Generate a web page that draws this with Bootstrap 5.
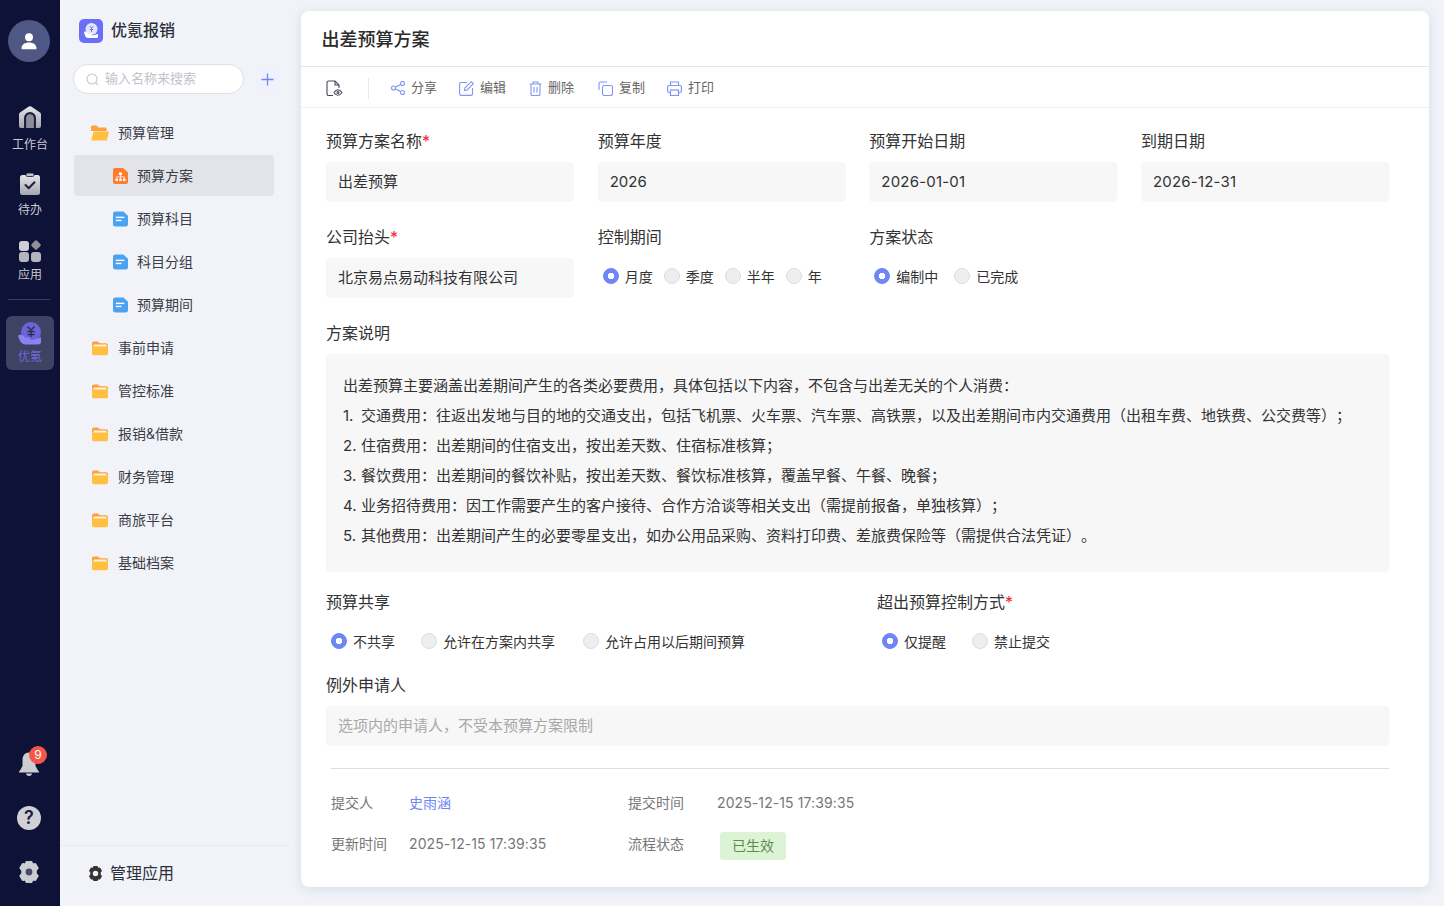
<!DOCTYPE html>
<html lang="zh-CN">
<head>
  <meta charset="UTF-8" />
  <meta name="viewport" content="width=device-width, initial-scale=1.0"/>
  <title>优氪报销</title>
  <link href="https://cdn.jsdelivr.net/npm/bootstrap@5.3.3/dist/css/bootstrap.min.css" rel="stylesheet" />
  <style>
    body {
      background: linear-gradient(to right, #0e1236 60px, #f1f3f9 60px);
      font-family: Inter, "Noto Sans CJK SC", sans-serif;
      color: #333;
      overflow: hidden;
      text-spacing-trim: space-all;
    }
    .app-shell { width: 1440px; height: 900px; }

    /* left rail */
    .rail { width: 60px; background: #0e1236; padding-top: 20px; }
    .rail-avatar { width: 42px; height: 42px; background: #4f5785; margin-left: -2px; margin-bottom: 44px; }
    .rail-link { width: 48px; font-size: 12px; line-height: 16px; color: #c9cad2; }
    .rail-link svg { display: block; }
    .rail-home { gap: 9px; margin-bottom: 20px; }
    .rail-todo { gap: 7px; margin-bottom: 22px; }
    .rail-apps { gap: 5px; }
    .rail-sep { width: 42px; height: 1px; background: #3a3e5e; margin: 16px 0 16px -2px; }
    .rail-active { height: 54px; background: #3f4263; color: #6d69d6; border-radius: 6px; padding-top: 6px; gap: 3px; }
    .rail-bottom { gap: 30px; padding-bottom: 17px; margin-left: -2px; }
    .rail-gear { margin-top: 1px; }
    .bell-count {
      top: -6px; right: -8px; width: 18px; height: 18px;
      background: #f5564a; color: #fff; font-size: 12px; line-height: 18px; text-align: center;
    }
    .help-dot { width: 24px; height: 24px; background: #d0d1d6; color: #1c2042; font-size: 18px; line-height: 24px; font-weight: 600; text-align: center; }

    /* tree column */
    .side { width: 229px; }
    .side-brand { height: 64px; padding: 19px 0 0 19px; font-size: 16px; font-weight: 500; color: #2b2f3a; gap: 8px; }
    .side-brand span { line-height: 22px; }
    .side-search { width: 171px; height: 30px; margin-left: 13px; background: #fff; border: 1px solid #e0e1e6; border-radius: 15px; font-size: 13px; color: #c2c3ca; padding-left: 12px; gap: 6px; }
    .side-add { width: 24px; height: 24px; margin-left: 11px; background: #eff2fc; border-radius: 4px; }
    .side-tree { margin: 18px 0 0 14px; width: 200px; }
    .tree-row { height: 41px; margin-bottom: 2px; font-size: 14px; color: #3a3d47; padding-left: 17px; gap: 9px; border-radius: 4px; }
    .tree-row.sub { padding-left: 39px; gap: 9px; }
    .tree-row.current { background: #e3e4e9; }
    .side-foot { height: 55px; border-top: 1px solid #e8e9ee; padding-left: 28px; font-size: 16px; color: #2b2f3a; gap: 7px; }

    /* main panel */
    .panel { width: 1128px; height: 876px; margin: 11px 0 0 12px; background: #fff; border-radius: 8px; box-shadow: 0 2px 12px rgba(30, 40, 80, .11); }
    .panel-title { height: 56px; padding: 2px 0 0 20.500px; font-size: 18px; font-weight: 500; color: #2b2b2b; border-bottom: 1px solid #e4e4e6; }
    .panel-tools { height: 41px; padding: 2px 0 0 25px; font-size: 13px; color: #666; border-bottom: 1px solid #eee; }
    .tools-sep { width: 1px; height: 21px; background: #e8e8e8; margin: 0 22px 0 24px; }
    .tool-btn { margin-right: 22px; gap: 6px; }
    .tool-btn.wide-a { margin-right: 23px; }
    .tool-btn.wide-b { margin-right: 24px; }
    .panel-form { padding: 21px 40px 0 25px; }
    .field-grid { display: grid; grid-template-columns: repeat(4, 1fr); column-gap: 23.670px; row-gap: 23px; }
    .share-grid { display: grid; grid-template-columns: 551px 1fr; }
    .field-label { font-size: 16px; line-height: 24px; margin-bottom: 9px; color: #333; }
    .field-label i { color: #f5222d; font-style: normal; }
    .field-label.gap-top { margin-top: 23px; }
    .field-label.gap-mid { margin-top: 14px; }
    .field-box { height: 40px; line-height: 40px; padding-left: 12px; background: #f7f7f7; border-radius: 4px; font-size: 15px; color: #333; }
    .field-box.empty { color: #a8a8a8; }
    .date-text { letter-spacing: .2px; }
    .note-box { height: 218px; padding: 17px; background: #f7f7f7; border-radius: 4px; font-size: 15px; line-height: 30px; color: #333; margin-bottom: 18px; }
    .note-num { display: inline-block; width: 18px; white-space: pre; }
    .radio-line { height: 36px; padding-left: 5px; font-size: 14px; color: #333; }
    .radio-line.gap-s { gap: 11px; }
    .radio-line.gap-m { gap: 16px; }
    .radio-line.gap-l { gap: 26px; }
    .radio-opt { gap: 6px; }
    .radio-opt.push { margin-left: 2px; }
    .radio-opt .form-check-input { width: 16px; height: 16px; margin: 0; background-color: #eee; border-color: #ddd; }
    .radio-opt .form-check-input:checked { background-image: radial-gradient(circle, #fff 3px, #6f86f5 3.500px); background-color: #6f86f5; border-color: #6f86f5; }
    .form-rule { height: 1px; background: #ddd; margin: 22px 0 13px 5px; }
    .meta-row { height: 41px; margin-left: 5px; font-size: 14px; color: #777; }
    .meta-a { width: 78px; }
    .meta-b { width: 219px; }
    .meta-c { width: 89px; }
    .meta-date { letter-spacing: .1px; }
    .meta-user { color: #6f86f5; }
    .meta-tag { width: 66px; height: 28px; line-height: 28px; margin: 4px 0 0 3px; background: #dcf3d6; color: #5c8d4f; text-align: center; border-radius: 3px; }
  </style>
</head>
<body>

  <svg width="0" height="0" class="position-absolute">
    <defs>
      <linearGradient id="railFill" x1="0" y1="0" x2="0" y2="1">
        <stop offset="0" stop-color="#e6e6ea"/><stop offset="1" stop-color="#a4a5ae"/>
      </linearGradient>
      <symbol id="folder" viewBox="0 0 18 16">
        <path d="M1 3.500C1 2.400 1.800 1.500 2.900 1.500h3.600c.6 0 1 .3 1.400.7l1 1.100h6.200c1 0 1.800.8 1.800 1.800V6H1z" fill="#ff9f40"/>
        <path d="M1 6h16v7.500c0 1-.8 1.800-1.800 1.800H2.800c-1 0-1.800-.8-1.800-1.800z" fill="#ffc042"/>
        <rect x="2.500" y="4.500" width="13" height="2" fill="#fff3d6"/>
      </symbol>
      <symbol id="doc" viewBox="0 0 16 16">
        <path d="M2.500 0H11l5 4.500V13.500a2.500 2.500 0 0 1-2.500 2.500h-11A2.500 2.500 0 0 1 0 13.500v-11A2.500 2.500 0 0 1 2.500 0z" fill="#4ba3f0"/>
        <rect x="3" y="5.500" width="9" height="1.500" fill="#fff"/>
        <rect x="3" y="8.800" width="6" height="1.500" fill="#fff"/>
      </symbol>
    </defs>
  </svg>

  <div class="app-shell d-flex">

    <!-- Rail -->
    <nav class="rail d-flex flex-column align-items-center flex-shrink-0">
      <div class="rail-avatar rounded-circle d-flex align-items-center justify-content-center">
        <svg width="18" height="18" viewBox="0 0 18 18" fill="#fff"><circle cx="9" cy="5.200" r="4"/><path d="M1.500 16.500c0-4 3.300-6 7.500-6s7.500 2 7.500 6c0 .4-.3.700-.7.700H2.200c-.4 0-.7-.3-.7-.7z"/></svg>
      </div>
      <a class="rail-link rail-home d-flex flex-column align-items-center text-decoration-none">
        <svg width="22" height="22" viewBox="0 0 22 22"><path d="M9.800.6 1 6.400C.4 6.800 0 7.500 0 8.300V20a2 2 0 0 0 2 2h18a2 2 0 0 0 2-2V8.300c0-.8-.4-1.500-1-1.900L12.200.6a2.200 2.200 0 0 0-2.400 0z" fill="url(#railFill)"/><path d="M5 22V12a6 6 0 0 1 12 0v10h-2.500V12a3.500 3.500 0 0 0-7 0v10z" fill="#1c2042"/><path d="M7.500 22V12a3.500 3.500 0 0 1 7 0v10z" fill="#8d8e99"/></svg>
        <span>工作台</span>
      </a>
      <a class="rail-link rail-todo d-flex flex-column align-items-center text-decoration-none">
        <svg width="20" height="22" viewBox="0 0 20 22"><rect y="2" width="20" height="20" rx="2.500" fill="url(#railFill)"/><rect x="6" y="0" width="8" height="3.500" rx="1.500" fill="#c4c5cc" stroke="#0e1236" stroke-width=".8"/><path d="m5.500 12 3.200 3.200 5.800-6" fill="none" stroke="#1c2042" stroke-width="2" stroke-linecap="round" stroke-linejoin="round"/></svg>
        <span>待办</span>
      </a>
      <a class="rail-link rail-apps d-flex flex-column align-items-center text-decoration-none">
        <svg width="22" height="22" viewBox="0 0 22 22"><rect x="0" y="1" width="10" height="10" rx="3" fill="#cfd0d5"/><rect x="13.300" y="1.300" width="7.500" height="7.500" rx="1.500" transform="rotate(45 17 5)" fill="#8f909a"/><rect x="0" y="12" width="10" height="10" rx="3" fill="#b5b6bd"/><rect x="12" y="12" width="10" height="10" rx="3" fill="#b5b6bd"/></svg>
        <span>应用</span>
      </a>
      <div class="rail-sep"></div>
      <a class="rail-link rail-active d-flex flex-column align-items-center text-decoration-none">
        <svg width="24" height="24" viewBox="0 0 24 24"><circle cx="13" cy="10" r="10" fill="#6b63d8"/><path d="M9.500 4.500 13 8l3.500-3.500M9.500 9.500h7M9.500 12.500h7M13 8v7" fill="none" stroke="#2c2c55" stroke-width="1.400"/><path d="M0 13.500c2.500-1.300 4.500-.8 6.500 1.200 1.500 1.500 3 1.500 4 .5l2.500 2.800c2.700-.3 6.500-1.300 10-2.800v4.600c0 1.800-1 2.700-3 2.700H7c-3 0-5.500-3.500-7-9z" fill="#8b83f0"/></svg>
        <span>优氪</span>
      </a>
      <div class="rail-bottom mt-auto d-flex flex-column align-items-center">
        <div class="position-relative">
          <svg class="d-block" width="20" height="24" viewBox="0 0 20 24" fill="#cccdd3"><path d="M10 0.500c-4 0-6.500 3-6.500 7.500v6L1 18.500c-.3.500-.6.800-1 1v1h20v-1c-.4-.2-.7-.5-1-1L16.500 14V8c0-4.500-2.500-7.500-6.500-7.500z"/><path d="M7 21.500h6c0 1.500-1.300 2.500-3 2.500s-3-1-3-2.500z"/></svg>
          <span class="bell-count position-absolute rounded-circle">9</span>
        </div>
        <div class="help-dot rounded-circle">?</div>
        <svg class="rail-gear" width="22" height="22" viewBox="0 0 22 22"><path d="M8.600.8h4.800l1 2.600 2.800-.4 2.400 4.100-1.800 2.200v3.400l1.800 2.200-2.400 4.100-2.800-.4-1 2.600H8.600l-1-2.600-2.800.4-2.400-4.100 1.800-2.200V9.300L2.400 7.100l2.400-4.100 2.800.4z" fill="#cccdd3" stroke="#cccdd3" stroke-width="2" stroke-linejoin="round"/><circle cx="11" cy="11" r="3.400" fill="#46496a"/></svg>
      </div>
    </nav>

    <!-- Tree column -->
    <aside class="side d-flex flex-column flex-shrink-0">
      <div class="side-brand d-flex">
        <svg width="24" height="24" viewBox="0 0 24 24"><rect width="24" height="24" rx="5" fill="#6b6ff5"/><circle cx="12.500" cy="10" r="6" fill="#e4e6ff"/><path d="M10.500 7 12.500 9l2-2M12.500 9v4M10.700 10.500h3.600" fill="none" stroke="#6b6ff5" stroke-width="1"/><path d="M5 13c1.500-.8 2.500-.3 3.500 1 1 1.200 2 1.200 2.800.6l1.700 1.800c1.700 0 3.500-.5 6-1.400v2.500c0 1-.6 1.500-1.800 1.500H9c-2 0-3.200-2-4-6z" fill="#fff"/></svg>
        <span>优氪报销</span>
      </div>
      <div class="d-flex align-items-center">
        <div class="side-search d-flex align-items-center">
          <svg width="13" height="13" viewBox="0 0 13 13" fill="none" stroke="#c4c5cb" stroke-width="1.100"><circle cx="6" cy="6" r="5"/><path d="m9.700 9.700 2.500 2.500"/></svg>
          <span>输入名称来搜索</span>
        </div>
        <div class="side-add d-flex align-items-center justify-content-center">
          <svg width="13" height="13" viewBox="0 0 13 13" stroke="#6f86f5" stroke-width="1.300"><path d="M6.500.5v12M.5 6.500h12"/></svg>
        </div>
      </div>
      <div class="side-tree flex-grow-1">
        <div class="tree-row d-flex align-items-center">
          <svg width="18" height="16" viewBox="0 0 18 16"><path d="M0 2.200C0 1.300.7.600 1.600.6h3.600c.5 0 .9.200 1.200.6l.9 1.200h6.800c.9 0 1.600.7 1.600 1.600V6H0z" fill="#ff9f40"/><path d="M2.500 6.500h15.500l-2 8.300c-.1.500-.6.800-1 .8H1.500C.8 15.600.3 15 .5 14.300z" fill="#ffc042"/></svg>
          <span>预算管理</span>
        </div>
        <div class="tree-row sub current d-flex align-items-center">
          <svg width="15" height="16" viewBox="0 0 15 16"><path d="M2 0h8l5 4.500V14a2 2 0 0 1-2 2H2a2 2 0 0 1-2-2V2a2 2 0 0 1 2-2z" fill="#ff7d2e"/><path d="M6 4.500h3V7H6zM2.500 10.500H5V13H2.500zM6.250 10.500h2.500V13h-2.500zM10 10.500h2.500V13H10z" fill="#fff"/><path d="M3.750 10.500V8.800h7.500v1.700M7.500 7v3.500" fill="none" stroke="#fff" stroke-width=".7"/></svg>
          <span>预算方案</span>
        </div>
        <div class="tree-row sub d-flex align-items-center"><svg width="15" height="16"><use href="#doc"/></svg><span>预算科目</span></div>
        <div class="tree-row sub d-flex align-items-center"><svg width="15" height="16"><use href="#doc"/></svg><span>科目分组</span></div>
        <div class="tree-row sub d-flex align-items-center"><svg width="15" height="16"><use href="#doc"/></svg><span>预算期间</span></div>
        <div class="tree-row d-flex align-items-center"><svg width="18" height="16"><use href="#folder"/></svg><span>事前申请</span></div>
        <div class="tree-row d-flex align-items-center"><svg width="18" height="16"><use href="#folder"/></svg><span>管控标准</span></div>
        <div class="tree-row d-flex align-items-center"><svg width="18" height="16"><use href="#folder"/></svg><span>报销&amp;借款</span></div>
        <div class="tree-row d-flex align-items-center"><svg width="18" height="16"><use href="#folder"/></svg><span>财务管理</span></div>
        <div class="tree-row d-flex align-items-center"><svg width="18" height="16"><use href="#folder"/></svg><span>商旅平台</span></div>
        <div class="tree-row d-flex align-items-center"><svg width="18" height="16"><use href="#folder"/></svg><span>基础档案</span></div>
      </div>
      <div class="side-foot d-flex align-items-center">
        <svg width="15" height="15" viewBox="0 0 22 22"><path d="M8.600.8h4.800l1 2.600 2.800-.4 2.400 4.100-1.800 2.200v3.400l1.800 2.200-2.400 4.100-2.800-.4-1 2.600H8.600l-1-2.600-2.800.4-2.400-4.100 1.800-2.200V9.300L2.400 7.100l2.400-4.100 2.800.4z" fill="#333" stroke="#333" stroke-width="1.500" stroke-linejoin="round"/><circle cx="11" cy="11" r="4" fill="#f1f3f9"/></svg>
        <span>管理应用</span>
      </div>
    </aside>

    <!-- Main panel -->
    <main class="panel flex-shrink-0">
      <div class="panel-title d-flex align-items-center">出差预算方案</div>
      <div class="panel-tools d-flex align-items-center">
        <svg width="18" height="17" viewBox="0 0 18 17" fill="none" stroke="#444a5c" stroke-width="1.100"><path d="M7 15.500H2.500A1.500 1.500 0 0 1 1 14V2.500A1.500 1.500 0 0 1 2.500 1H9l4 4v3"/><path d="M9 1v4h4"/><path d="M8 12.500c1.300-2 2.500-2.800 4-2.800s2.700.8 4 2.800c-1.300 2-2.500 2.800-4 2.800s-2.700-.8-4-2.800z"/><circle cx="12" cy="12.500" r="1"/></svg>
        <div class="tools-sep"></div>
        <div class="tool-btn d-flex align-items-center">
          <svg width="14" height="14" viewBox="0 0 14 14" fill="none" stroke="#7f96f5" stroke-width="1.100"><circle cx="2.500" cy="7" r="2"/><circle cx="11.500" cy="2.500" r="2"/><circle cx="11.500" cy="11.500" r="2"/><path d="m4.300 6.100 5.400-2.700M4.300 7.900l5.400 2.700"/></svg>
          <span>分享</span>
        </div>
        <div class="tool-btn wide-a d-flex align-items-center">
          <svg width="15" height="15" viewBox="0 0 15 15" fill="none" stroke="#7f96f5" stroke-width="1.100"><path d="M8 1.500H2A1.500 1.500 0 0 0 .6 3v10A1.500 1.500 0 0 0 2 14.400h10a1.500 1.500 0 0 0 1.500-1.400V7"/><path d="m5.500 9.500.5-2.700L12.300.7l2 2L8.200 9z"/></svg>
          <span>编辑</span>
        </div>
        <div class="tool-btn wide-b d-flex align-items-center">
          <svg width="13" height="15" viewBox="0 0 13 15" fill="none" stroke="#7f96f5" stroke-width="1.100"><path d="M.5 3h12M4 3V1h5v2M2 3v10.500A1 1 0 0 0 3 14.500h7a1 1 0 0 0 1-1V3M5 6v5.500M8 6v5.500"/></svg>
          <span>删除</span>
        </div>
        <div class="tool-btn d-flex align-items-center">
          <svg width="15" height="15" viewBox="0 0 15 15" fill="none" stroke="#7f96f5" stroke-width="1.100"><path d="M9 1H2.500A1.500 1.500 0 0 0 1 2.500V9"/><rect x="4.500" y="4.500" width="10" height="10" rx="2"/></svg>
          <span>复制</span>
        </div>
        <div class="tool-btn d-flex align-items-center">
          <svg width="15" height="15" viewBox="0 0 15 15" fill="none" stroke="#7f96f5" stroke-width="1.200"><path d="M3.500 4.500V1h8v3.500"/><path d="M3.500 11.500H2A1.500 1.500 0 0 1 .6 10V6A1.500 1.500 0 0 1 2 4.500h11A1.500 1.500 0 0 1 14.400 6v4a1.500 1.500 0 0 1-1.400 1.500h-1.500"/><rect x="3.500" y="9" width="8" height="5.500"/></svg>
          <span>打印</span>
        </div>
      </div>

      <div class="panel-form">
        <div class="field-grid">
          <div>
            <div class="field-label">预算方案名称<i>*</i></div>
            <div class="field-box">出差预算</div>
          </div>
          <div>
            <div class="field-label">预算年度</div>
            <div class="field-box">2026</div>
          </div>
          <div>
            <div class="field-label">预算开始日期</div>
            <div class="field-box date-text">2026-01-01</div>
          </div>
          <div>
            <div class="field-label">到期日期</div>
            <div class="field-box date-text">2026-12-31</div>
          </div>
          <div>
            <div class="field-label">公司抬头<i>*</i></div>
            <div class="field-box">北京易点易动科技有限公司</div>
          </div>
          <div>
            <div class="field-label">控制期间</div>
            <div class="radio-line gap-s d-flex align-items-center">
              <label class="radio-opt d-flex align-items-center"><input class="form-check-input" type="radio" name="period" checked>月度</label>
              <label class="radio-opt d-flex align-items-center"><input class="form-check-input" type="radio" name="period">季度</label>
              <label class="radio-opt d-flex align-items-center"><input class="form-check-input" type="radio" name="period">半年</label>
              <label class="radio-opt d-flex align-items-center"><input class="form-check-input" type="radio" name="period">年</label>
            </div>
          </div>
          <div>
            <div class="field-label">方案状态</div>
            <div class="radio-line gap-m d-flex align-items-center">
              <label class="radio-opt d-flex align-items-center"><input class="form-check-input" type="radio" name="state" checked>编制中</label>
              <label class="radio-opt d-flex align-items-center"><input class="form-check-input" type="radio" name="state">已完成</label>
            </div>
          </div>
        </div>

        <div class="field-label gap-top">方案说明</div>
        <div class="note-box">
          <div>出差预算主要涵盖出差期间产生的各类必要费用，具体包括以下内容，不包含与出差无关的个人消费：</div>
          <div><span class="note-num">1. </span>交通费用：往返出发地与目的地的交通支出，包括飞机票、火车票、汽车票、高铁票，以及出差期间市内交通费用（出租车费、地铁费、公交费等）；</div>
          <div><span class="note-num">2. </span>住宿费用：出差期间的住宿支出，按出差天数、住宿标准核算；</div>
          <div><span class="note-num">3. </span>餐饮费用：出差期间的餐饮补贴，按出差天数、餐饮标准核算，覆盖早餐、午餐、晚餐；</div>
          <div><span class="note-num">4. </span>业务招待费用：因工作需要产生的客户接待、合作方洽谈等相关支出（需提前报备，单独核算）；</div>
          <div><span class="note-num">5. </span>其他费用：出差期间产生的必要零星支出，如办公用品采购、资料打印费、差旅费保险等（需提供合法凭证）。</div>
        </div>

        <div class="share-grid">
          <div>
            <div class="field-label">预算共享</div>
            <div class="radio-line gap-l d-flex align-items-center">
              <label class="radio-opt d-flex align-items-center"><input class="form-check-input" type="radio" name="share" checked>不共享</label>
              <label class="radio-opt d-flex align-items-center"><input class="form-check-input" type="radio" name="share">允许在方案内共享</label>
              <label class="radio-opt push d-flex align-items-center"><input class="form-check-input" type="radio" name="share">允许占用以后期间预算</label>
            </div>
          </div>
          <div>
            <div class="field-label">超出预算控制方式<i>*</i></div>
            <div class="radio-line gap-l d-flex align-items-center">
              <label class="radio-opt d-flex align-items-center"><input class="form-check-input" type="radio" name="over" checked>仅提醒</label>
              <label class="radio-opt d-flex align-items-center"><input class="form-check-input" type="radio" name="over">禁止提交</label>
            </div>
          </div>
        </div>

        <div class="field-label gap-mid">例外申请人</div>
        <div class="field-box empty">选项内的申请人，不受本预算方案限制</div>

        <div class="form-rule"></div>
        <div class="meta-row d-flex align-items-center">
          <span class="meta-a">提交人</span>
          <span class="meta-b meta-user">史雨涵</span>
          <span class="meta-c">提交时间</span>
          <span class="meta-date">2025-12-15 17:39:35</span>
        </div>
        <div class="meta-row d-flex align-items-center">
          <span class="meta-a">更新时间</span>
          <span class="meta-b meta-date">2025-12-15 17:39:35</span>
          <span class="meta-c">流程状态</span>
          <span class="meta-tag">已生效</span>
        </div>
      </div>
    </main>
  </div>

  <script src="https://cdn.jsdelivr.net/npm/bootstrap@5.3.3/dist/js/bootstrap.bundle.min.js"></script>
</body>
</html>
